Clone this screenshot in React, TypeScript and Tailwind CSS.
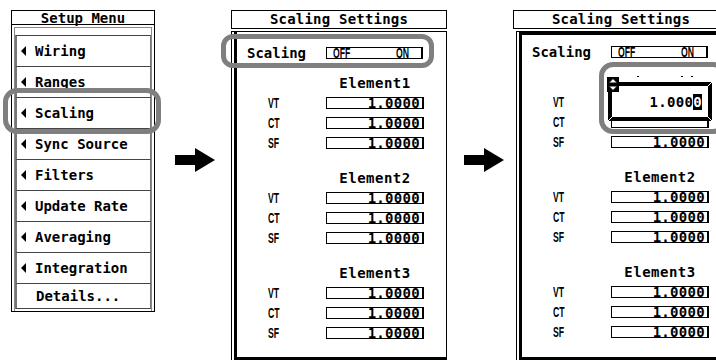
import type { ReactNode } from 'react'

const MENU_ITEMS = [
  'Wiring',
  'Ranges',
  'Scaling',
  'Sync Source',
  'Filters',
  'Update Rate',
  'Averaging',
  'Integration',
] as const

const ELEMENTS = ['Element1', 'Element2', 'Element3'] as const

function LeftTriangle() {
  return (
    <svg width="5" height="10" viewBox="0 0 5 10" className="shrink-0">
      <polygon points="5,0 0,5 5,10" fill="#000" />
    </svg>
  )
}

function Arrow() {
  return (
    <svg width="40" height="24" viewBox="0 0 40 24">
      <polygon points="0,7 20,7 20,0 40,12 20,24 20,17 0,17" fill="#000" />
    </svg>
  )
}

// condensed bold face used for the short field labels (VT, OFF ...)
function Narrow({ children, origin = 'left' }: { children: ReactNode; origin?: 'left' | 'right' }) {
  return (
    <span
      className={`inline-block scale-x-[0.62] font-['Liberation_Sans',Arial,sans-serif] text-[14px] font-bold leading-none tracking-normal ${
        origin === 'left' ? 'origin-left' : 'origin-right'
      }`}
    >
      {children}
    </span>
  )
}

function ValueBox({ value }: { value?: string }) {
  return (
    <div className="flex h-[12px] w-[98px] items-center justify-end border border-r-2 border-black pr-[2px] text-[14px] leading-none tracking-[0.3px]">
      {value}
    </div>
  )
}

function ValueRow({ label, value }: { label: string; value?: string }) {
  return (
    <div className="flex h-[20px] items-center pl-[31px]">
      <div className="w-[58px]">
        <Narrow>{label}</Narrow>
      </div>
      <ValueBox value={value} />
    </div>
  )
}

function Section({ name, editing }: { name: string; editing?: boolean }) {
  // while editing, the first block sits under the entry box
  return (
    <div className="flex flex-col">
      <div className="flex h-[20px] items-center pl-[89px]">
        <div className={`w-[98px] text-center leading-none tracking-[0.5px] ${editing ? 'invisible' : ''}`}>{name}</div>
      </div>
      <ValueRow label="VT" value={editing ? undefined : '1.0000'} />
      <ValueRow label="CT" value={editing ? undefined : '1.0000'} />
      <ValueRow label="SF" value="1.0000" />
    </div>
  )
}

function SetupMenu() {
  return (
    <div className="relative flex h-[302px] w-[144px] shrink-0 flex-col border border-black">
      <div className="h-[14px] border-b border-black text-center leading-[14px]">Setup Menu</div>
      <div className="mx-[2px] mt-[2px] flex flex-1 flex-col border-x border-t border-[#8a8a8a] pt-[7px]">
        {MENU_ITEMS.map((item) => (
          <div
            key={item}
            className="flex h-[31px] items-center border-t border-r border-l-2 border-t-[#444] border-r-[#777] border-l-[#777] pl-[4px]"
          >
            <LeftTriangle />
            <span className="ml-[9px] leading-none">{item}</span>
          </div>
        ))}
        <div className="flex h-[26px] items-center border-y border-r border-l-2 border-y-[#444] border-r-[#777] border-l-[#777] pl-[19px]">
          <span className="leading-none">Details...</span>
        </div>
      </div>
      {/* highlight ring */}
      <div className="pointer-events-none absolute top-[77px] left-[-9px] h-[46px] w-[158px] rounded-[14px] border-[5px] border-[#7f7f7f]" />
    </div>
  )
}

function ScalingPanel({ editing }: { editing?: boolean }) {
  return (
    <div className="relative flex h-[350px] w-[216px] shrink-0 flex-col">
      <div className="h-[19px] border border-black text-center leading-[17px] tracking-[0.2px]">Scaling Settings</div>
      <div className={`mt-[2px] flex flex-1 border-t border-l border-black ${editing ? 'ml-[3px]' : 'border-r'}`}>
        <div
          className={`ml-[2px] flex flex-1 flex-col border-b-[3px] border-l-[3px] border-black ${
            editing ? 'border-t-[3px] pt-[7px]' : 'pt-[11px]'
          }`}
        >
          <div className="flex h-[20px] items-center pl-[10px]">
            <div className="w-[79px] leading-none">Scaling</div>
            <div className="flex h-[12px] w-[97px] items-center justify-between border border-r-2 border-black pr-[12px] pl-[6px]">
              <Narrow>OFF</Narrow>
              <Narrow origin="right">ON</Narrow>
            </div>
          </div>
          <div className="mt-[10px] flex flex-col gap-[15px]">
            {ELEMENTS.map((el, i) => (
              <Section key={el} name={el} editing={editing && i === 0} />
            ))}
          </div>
        </div>
      </div>

      {editing ? (
        <>
          {/* remnants of the covered label */}
          <div className="absolute top-[66px] left-[124px] h-px w-[2px] bg-black" />
          <div className="absolute top-[66px] left-[168px] h-px w-[2px] bg-black" />
          <div className="absolute top-[66px] left-[178px] h-px w-[2px] bg-black" />
          {/* value entry box */}
          <div className="absolute top-[72px] left-[95px] flex h-[39px] w-[104px] items-center justify-end border-4 border-black bg-white pr-[6px] text-[14px] leading-none tracking-[0.3px]">
            <svg className="absolute -inset-[4px]" width="104" height="39" viewBox="0 0 104 39">
              <line x1="0" y1="0" x2="4" y2="4" stroke="#fff" strokeWidth="1" />
              <line x1="104" y1="0" x2="100" y2="4" stroke="#fff" strokeWidth="1" />
              <line x1="0" y1="39" x2="4" y2="35" stroke="#fff" strokeWidth="1" />
              <line x1="104" y1="39" x2="100" y2="35" stroke="#fff" strokeWidth="1" />
            </svg>
            <span>
              1.000<span className="bg-black text-white">0</span>
            </span>
          </div>
          {/* up/down spinner mark */}
          <svg className="absolute top-[67px] left-[94px]" width="12" height="15" viewBox="0 0 12 15">
            <rect x="0" y="0" width="12" height="15" fill="#000" />
            <polygon points="6,1.5 10.5,6 1.5,6" fill="#fff" stroke="#000" strokeWidth="1" />
            <polygon points="1.5,9 10.5,9 6,13.5" fill="#fff" stroke="#000" strokeWidth="1" />
          </svg>
          {/* highlight ring */}
          <div className="pointer-events-none absolute top-[52px] left-[86px] h-[72px] w-[128px] rounded-[14px] border-[5px] border-[#7f7f7f]" />
        </>
      ) : (
        <div className="pointer-events-none absolute top-[24px] left-[-10px] h-[34px] w-[213px] rounded-[12px] border-[5px] border-[#7f7f7f]" />
      )}
    </div>
  )
}

export default function App() {
  return (
    <div className="relative flex h-[360px] w-[716px] items-start overflow-hidden bg-white pt-[10px] pl-[11px] font-['DejaVu_Sans_Mono',monospace] text-[14px] font-bold text-black">
      <SetupMenu />
      <div className="flex w-[76px] shrink-0 pt-[138px] pl-[20px]">
        <Arrow />
      </div>
      <ScalingPanel />
      <div className="flex w-[66px] shrink-0 pt-[138px] pl-[17px]">
        <Arrow />
      </div>
      <ScalingPanel editing />
    </div>
  )
}
